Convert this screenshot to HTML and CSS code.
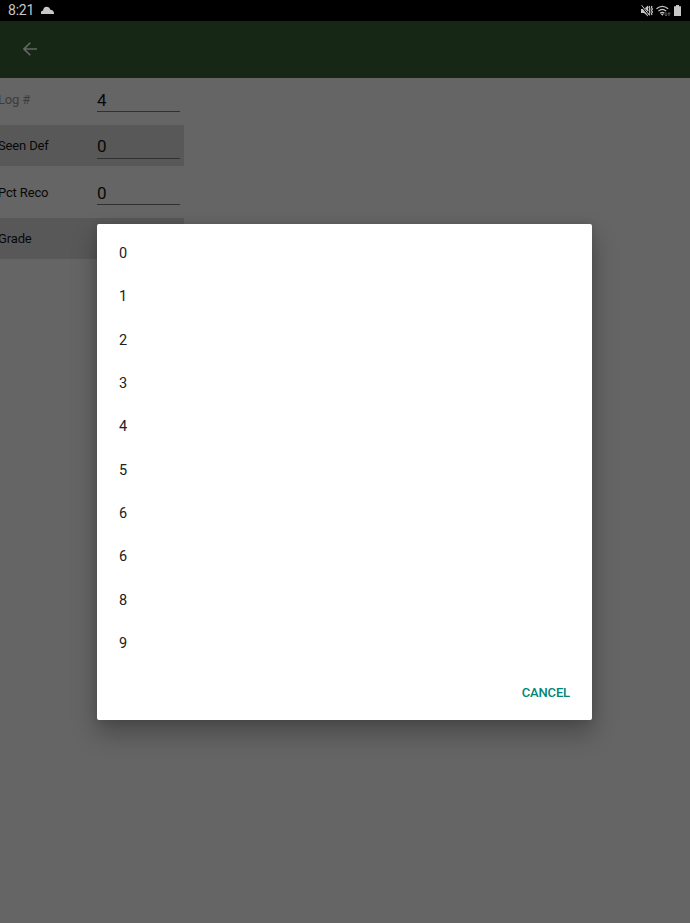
FILE: index.html
```
<!DOCTYPE html>
<html lang="en">
<head>
<meta charset="utf-8">
<title>Log grade</title>
<link rel="stylesheet" href="styles.css">
</head>
<body>
<header class="status">
  <span class="time">8:21</span>
  <svg class="cloud" width="13" height="8" viewBox="0 0 13 8"><path d="M0 8V6Q.3 4.7 2 4.5 2.5 1 5.5.7 8.5.7 9.3 3.8 12.7 4 13 7v1z"/></svg>
  <div class="system">
    <svg width="12" height="12" viewBox="0 0 12 12"><path d="M0 4h3l4-3.5v11L3 8H0z"/><path class="slash" d="M0 0l9 11"/><path class="thin" d="M.6 .2l8 10.3"/><path class="line" d="M8.6 1l-.6 1.5 1 1.5-1 1.5 1 1.5-1 1.5.6 1.5M11 1l-.6 1.5 1 1.5-1 1.5 1 1.5-1 1.5.6 1.5"/></svg>
    <svg width="15" height="12" viewBox="0 0 15 12"><path class="line" d="M.5 3.8q5.8-5 11.6 0M2.4 6.1q3.9-3.4 7.8 0M4.2 8.2q2.1-1.7 4.2 0"/><path d="M4.7 8.8h3.2L6.3 10.8z"/><path class="data" d="M10 7.3v3.2M8.9 9.6l1.1 1.2 1.1-1.2M13 11V7.7M11.9 8.8L13 7.6l1.1 1.2"/></svg>
    <svg width="7" height="11" viewBox="0 0 7 11"><path d="M2 0h3v1.3h2V11H0V1.3h2z"/></svg>
  </div>
</header>
<nav class="toolbar">
  <svg width="14" height="14" viewBox="0 0 14 14"><path d="M14 7H1M7.3.7L1 7l6.3 6.3"/></svg>
</nav>
<main class="form">
  <div class="row"><span class="label muted">Log #</span><span class="field">4</span></div>
  <div class="row shaded"><span class="label">Seen Def</span><span class="field">0</span></div>
  <div class="row"><span class="label">Pct Reco</span><span class="field">0</span></div>
  <div class="row shaded"><span class="label">Grade</span></div>
</main>
<section class="dialog" role="dialog">
  <ul class="options">
    <li>0</li><li>1</li><li>2</li><li>3</li><li>4</li><li>5</li><li>6</li><li>6</li><li>8</li><li>9</li>
  </ul>
  <div class="actions"><button class="cancel">CANCEL</button></div>
</section>
</body>
</html>
```
FILE: styles.css
```
* { box-sizing: border-box; }
body {
  margin: 0;
  height: 923px;
  overflow: hidden;
  background: #656565;
  font-family: Roboto, sans-serif;
  color: #080808;
}
svg { display: block; }
.status {
  display: flex;
  align-items: center;
  height: 21px;
  padding: 0 9px 0 8px;
  background: #000;
  color: #c8c8c8;
  fill: #c8c8c8;
}
.time { width: 33px; font-size: 14px; letter-spacing: -.2px; line-height: 21px; }
.cloud { margin-top: -1px; }
.system { display: flex; align-items: center; gap: 3px; margin-left: auto; }
.line { fill: none; stroke: #c8c8c8; stroke-width: 1.2; }
.slash { stroke: #000; stroke-width: 2.2; }
.thin { stroke: #c8c8c8; stroke-width: 1; }
.data { fill: none; stroke: #777; stroke-width: .9; }
.toolbar {
  display: flex;
  align-items: center;
  height: 57px;
  padding: 0 23px 1px;
  background: #172715;
}
.toolbar path { fill: none; stroke: #666; stroke-width: 1.6; }
.form { display: flex; flex-direction: column; gap: 5.5px; width: 184px; padding-top: .5px; }
.row { display: flex; align-items: flex-start; height: 41px; }
.shaded { background: #585858; }
.label {
  width: 97px;
  flex: none;
  margin-left: -2px;
  margin-right: 2px;
  font-size: 13px;
  letter-spacing: -.15px;
  line-height: 41.5px;
}
.muted { color: #3c3c3c; }
.field {
  width: 83px;
  height: 33.5px;
  border-bottom: 1px solid #303030;
  font-size: 17px;
  line-height: 42px;
}
.dialog {
  position: absolute;
  left: 97px;
  top: 224px;
  width: 495px;
  height: 496px;
  padding-top: 8px;
  background: #fff;
  border-radius: 2px;
  box-shadow: 0 13px 24px 1px rgba(0, 0, 0, .27), 0 0 8px rgba(0, 0, 0, .12);
}
.options { margin: 0; padding: 0; list-style: none; }
.options li {
  height: 43.34px;
  padding-left: 22px;
  color: #212121;
  font-size: 14.5px;
  line-height: 43.34px;
}
.actions { display: flex; justify-content: flex-end; padding: 9px 22px 0 0; }
.cancel {
  height: 36px;
  padding: 0;
  border: 0;
  background: none;
  color: #008577;
  font: 500 13px Roboto, sans-serif;
  letter-spacing: -.15px;
}
```
